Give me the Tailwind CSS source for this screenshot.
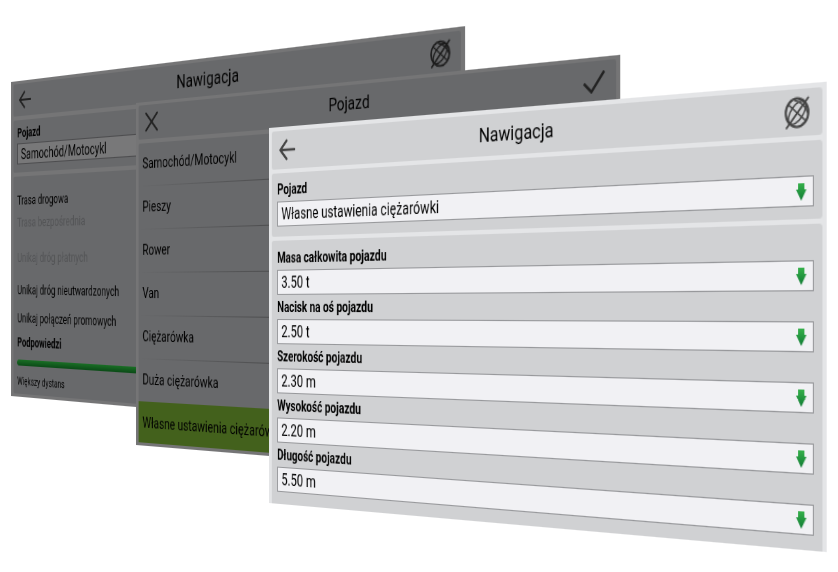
<!DOCTYPE html>
<html lang="pl">
<head>
<meta charset="utf-8">
<meta name="viewport" content="width=device-width, initial-scale=1">
<title>Nawigacja – Pojazd</title>
<script src="https://cdn.jsdelivr.net/npm/@tailwindcss/browser@4"></script>
</head>
<body class="bg-white font-[Roboto,'Noto_Sans',sans-serif] text-black">
<svg class="absolute size-0" aria-hidden="true">
  <defs>
    <linearGradient id="green" x1="0" y1="0" x2="0" y2="1">
      <stop offset="0" stop-color="#35b04a"/>
      <stop offset="1" stop-color="#0f7a33"/>
    </linearGradient>
    <symbol id="back" viewBox="0 0 24 24">
      <path d="M11.5 3 2.5 12l9 9M2.5 12H23" fill="none" stroke="currentColor" stroke-width="2.6" stroke-linecap="round" stroke-linejoin="round"/>
    </symbol>
    <symbol id="close" viewBox="0 0 20 20">
      <path d="M1.5 1.5l17 17M18.5 1.5l-17 17" fill="none" stroke="currentColor" stroke-width="2.4" stroke-linecap="round"/>
    </symbol>
    <symbol id="check" viewBox="0 0 24 20">
      <path d="M1.5 11.5 9 18.5 22.5 1.5" fill="none" stroke="currentColor" stroke-width="2.6" stroke-linecap="square"/>
    </symbol>
    <symbol id="globe" viewBox="0 0 24 26">
      <g fill="none" stroke="currentColor">
        <ellipse cx="12" cy="13" rx="10.8" ry="11.4" stroke-width="2"/>
        <g stroke-width="1.4" transform="rotate(40 12 13)">
          <ellipse cx="12" cy="13" rx="5.8" ry="11"/>
          <path d="M1 13h22M3.5 7q8.5-4.500 17 0"/>
        </g>
        <path d="M2 25 22.500 1.500" stroke-width="1.8" stroke-linecap="round"/>
      </g>
    </symbol>
    <symbol id="down" viewBox="0 0 10 14">
      <path d="M2 0h6v5h2L5 14 0 5h2z" fill="url(#green)"/>
    </symbol>
  </defs>
</svg>

<main class="relative min-h-screen overflow-hidden">

  <!-- Navigation settings, rear window -->
  <section class="absolute left-[11px] top-[82px] flex h-[314px] w-[565px] origin-[0_183px] [transform:perspective(1903px)_rotateY(-52deg)] flex-col gap-1 bg-[#757576] px-1 py-[3px] outline-1 outline-transparent">
    <header class="flex h-8 shrink-0 items-center justify-between rounded-xs bg-[#68696b] pl-2 pr-[10px] text-[#222]">
      <button aria-label="Wstecz"><svg class="size-5"><use href="#back"/></svg></button>
      <h2 class="text-[17px] text-black">Nawigacja</h2>
      <button aria-label="Mapa" class="text-[#1c1c1c]"><svg class="h-[22px] w-5"><use href="#globe"/></svg></button>
    </header>
    <div class="shrink-0 rounded-xs bg-[#68696b] px-[6px] pb-[8px] pt-[3px]">
      <label for="rear-vehicle" class="block text-[12px] leading-5 font-bold">Pojazd</label>
      <select id="rear-vehicle" class="block h-[21px] w-full appearance-none border border-[#4d4d4f] bg-[#787879] px-[5px] text-[14px] leading-[18px]">
        <option>Samochód/Motocykl</option>
      </select>
    </div>
    <div class="flex-1 rounded-xs bg-[#68696b] px-[6px] text-[12px] leading-5">
      <p class="pt-[14px]">Trasa drogowa</p>
      <p class="pt-[2px] text-[#535456]">Trasa bezpośrednia</p>
      <p class="pt-[15px] text-[#535456]">Unikaj dróg płatnych</p>
      <p class="pt-3">Unikaj dróg nieutwardzonych</p>
      <p class="pt-2">Unikaj połączeń promowych</p>
      <label for="hints" class="block pt-1 font-bold">Podpowiedzi</label>
      <input id="hints" type="range" class="mt-[7px] block h-[6px] w-full appearance-none rounded-full bg-linear-to-b from-[#1a6f25] to-[#0b4a17]">
      <p class="pt-1 text-[10px] leading-6">Większy dystans</p>
    </div>
  </section>

  <!-- Vehicle picker, middle window -->
  <section class="absolute left-[136px] top-[103px] flex h-[342px] w-[599px] origin-[0_187px] [transform:perspective(2240px)_rotateY(-50deg)] flex-col gap-1 bg-[#757576] px-1 py-[3px] outline-1 outline-transparent">
    <header class="flex h-[34px] shrink-0 items-center justify-between rounded-xs bg-[#68696b] px-[10px] text-[#222]">
      <button aria-label="Zamknij"><svg class="size-5"><use href="#close"/></svg></button>
      <h2 class="text-[17px] text-black">Pojazd</h2>
      <button aria-label="Zatwierdź"><svg class="h-[18px] w-6"><use href="#check"/></svg></button>
    </header>
    <ul class="flex-1 rounded-xs bg-[#68696b] text-[15px] leading-10">
      <li><button class="block h-[42px] w-full px-[6px] pb-[2px] text-left">Samochód/Motocykl</button><div class="h-px bg-linear-to-r from-transparent via-[#3f3f40] to-transparent"></div></li>
      <li><button class="block h-[42px] w-full px-[6px] pb-[2px] text-left">Pieszy</button><div class="h-px bg-linear-to-r from-transparent via-[#3f3f40] to-transparent"></div></li>
      <li><button class="block h-[42px] w-full px-[6px] pb-[2px] text-left">Rower</button><div class="h-px bg-linear-to-r from-transparent via-[#3f3f40] to-transparent"></div></li>
      <li><button class="block h-[42px] w-full px-[6px] pb-[2px] text-left">Van</button><div class="h-px bg-linear-to-r from-transparent via-[#3f3f40] to-transparent"></div></li>
      <li><button class="block h-[42px] w-full px-[6px] pb-[2px] text-left">Ciężarówka</button><div class="h-px bg-linear-to-r from-transparent via-[#3f3f40] to-transparent"></div></li>
      <li><button class="block h-[42px] w-full px-[6px] pb-[2px] text-left">Duża ciężarówka</button></li>
      <li><button aria-pressed="true" class="block h-[41px] w-full bg-[#43611c] px-[6px] text-left">Własne ustawienia ciężarówki</button></li>
    </ul>
  </section>

  <!-- Truck settings, front window -->
  <section class="absolute left-[269px] top-[128px] flex h-[375px] w-[652px] origin-[0_182px] [transform:perspective(2352px)_rotateY(-47deg)] flex-col gap-1 bg-[#e4e5e7] px-1 pt-1 outline-1 outline-transparent">
    <header class="flex h-[38px] shrink-0 items-center justify-between rounded-[3px] bg-[#d0d1d3] pl-[10px] pr-3 text-[#444]">
      <button aria-label="Wstecz"><svg class="size-6"><use href="#back"/></svg></button>
      <h1 class="text-[19px] text-black">Nawigacja</h1>
      <button aria-label="Mapa"><svg class="h-[26px] w-6"><use href="#globe"/></svg></button>
    </header>
    <div class="shrink-0 rounded-[3px] bg-[#d0d1d3] px-2 pb-[10px] pt-1">
      <label for="vehicle" class="block text-[14px] leading-6 font-bold">Pojazd</label>
      <div class="relative">
        <select id="vehicle" class="block h-[25px] w-full appearance-none border border-[#97989b] bg-[#f1f1f4] px-[5px] text-[16px]"><option>Własne ustawienia ciężarówki</option></select>
        <svg class="pointer-events-none absolute right-[7px] top-[6px] h-[14px] w-[10px]"><use href="#down"/></svg>
      </div>
    </div>
    <form class="flex-1 rounded-t-[3px] bg-[#d0d1d3] px-2 pt-[5px]">
      <label for="mass" class="block text-[14px] leading-6 font-bold">Masa całkowita pojazdu</label>
      <div class="relative">
        <select id="mass" class="block h-[25px] w-full appearance-none border border-[#97989b] bg-[#f1f1f4] px-[5px] text-[16px]"><option>3.50 t</option></select>
        <svg class="pointer-events-none absolute right-[7px] top-[6px] h-[14px] w-[10px]"><use href="#down"/></svg>
      </div>
      <label for="axle" class="block text-[14px] leading-6 font-bold">Nacisk na oś pojazdu</label>
      <div class="relative">
        <select id="axle" class="block h-[25px] w-full appearance-none border border-[#97989b] bg-[#f1f1f4] px-[5px] text-[16px]"><option>2.50 t</option></select>
        <svg class="pointer-events-none absolute right-[7px] top-[6px] h-[14px] w-[10px]"><use href="#down"/></svg>
      </div>
      <label for="width" class="block text-[14px] leading-6 font-bold">Szerokość pojazdu</label>
      <div class="relative">
        <select id="width" class="block h-[25px] w-full appearance-none border border-[#97989b] bg-[#f1f1f4] px-[5px] text-[16px]"><option>2.30 m</option></select>
        <svg class="pointer-events-none absolute right-[7px] top-[6px] h-[14px] w-[10px]"><use href="#down"/></svg>
      </div>
      <label for="height" class="block text-[14px] leading-6 font-bold">Wysokość pojazdu</label>
      <div class="relative">
        <select id="height" class="block h-[25px] w-full appearance-none border border-[#97989b] bg-[#f1f1f4] px-[5px] text-[16px]"><option>2.20 m</option></select>
        <svg class="pointer-events-none absolute right-[7px] top-[6px] h-[14px] w-[10px]"><use href="#down"/></svg>
      </div>
      <label for="length" class="block text-[14px] leading-6 font-bold">Długość pojazdu</label>
      <div class="relative">
        <select id="length" class="block h-[25px] w-full appearance-none border border-[#97989b] bg-[#f1f1f4] px-[5px] text-[16px]"><option>5.50 m</option></select>
        <svg class="pointer-events-none absolute right-[7px] top-[6px] h-[14px] w-[10px]"><use href="#down"/></svg>
      </div>
    </form>
  </section>
</main>
</body>
</html>
